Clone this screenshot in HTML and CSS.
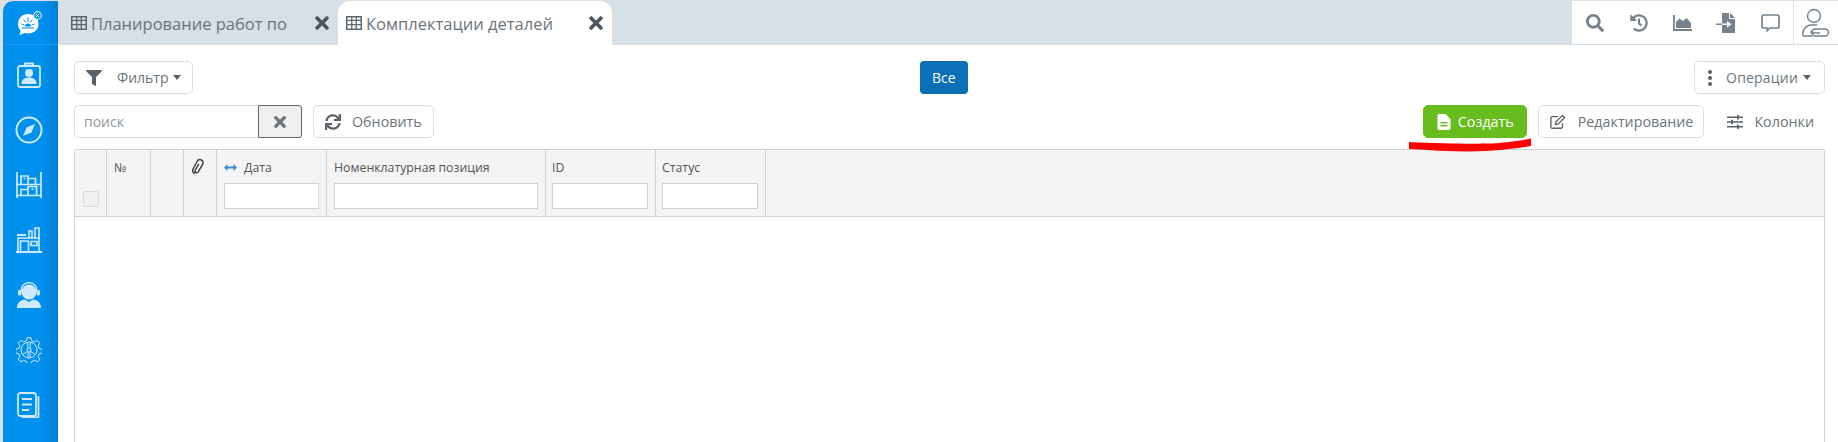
FILE: index.html
```html
<!DOCTYPE html>
<html lang="ru">
<head>
    <meta charset="UTF-8">
    <title>Комплектации деталей</title>
    <link rel="stylesheet" href="styles.css">
</head>
<body>
    <svg class="defs" width="0" height="0">
        <symbol id="i-grid" viewBox="0 0 16 14"><path d="M0 0h16v14H0zM1.500 1.500v2.300h3.600V1.500zm4.900 0v2.300h3.200V1.500zm4.500 0v2.300h3.600V1.500zM1.500 5.100v2.900h3.600V5.100zm4.900 0v2.900h3.200V5.100zm4.500 0v2.900h3.600V5.100zM1.500 9.300v3.200h3.600V9.300zm4.900 0v3.200h3.200V9.300zm4.500 0v3.200h3.600V9.300z" fill-rule="evenodd"/></symbol>
        <symbol id="i-x" viewBox="0 0 352 512"><path d="M242.720 256l100.070-100.070c12.280-12.280 12.280-32.190 0-44.480l-22.240-22.240c-12.280-12.280-32.190-12.280-44.480 0L176 189.280 75.930 89.210c-12.280-12.280-32.190-12.280-44.480 0L9.210 111.450c-12.280 12.280-12.280 32.190 0 44.480L109.280 256 9.210 356.070c-12.280 12.280-12.280 32.190 0 44.480l22.240 22.240c12.280 12.280 32.200 12.280 44.480 0L176 322.720l100.070 100.070c12.280 12.280 32.200 12.280 44.480 0l22.240-22.240c12.280-12.280 12.280-32.190 0-44.480L242.720 256z"/></symbol>
        <symbol id="i-filter" viewBox="0 0 512 512"><path d="M487.976 0H24.028C2.710 0-8.047 25.866 7.058 40.971L192 225.941V432c0 7.831 3.821 15.170 10.237 19.662l80 55.980C298.020 518.690 320 507.493 320 487.980V225.941l184.947-184.970C520.021 25.896 509.338 0 487.976 0z"/></symbol>
    </svg>

    <div class="app">
        <aside class="sidebar">
            <div class="side-logo">
                <svg width="28" height="28" viewBox="0 0 28 28"><path d="M13 4C7 4 3 8.500 3 14c0 2.800 1 5 2.700 6.800L4.500 25l5.200-2c1 .3 2.200.5 3.300.5 6 0 10.500-4 10.500-9.500S19 4 13 4z" fill="#fff"/><path d="M10 16.500a3 3 0 0 1 6 0zM7 17.500h12v1.100H7z" fill="#0090ee"/><path d="M13 7.500v4.500M8.500 9.500l2.500 3M17.500 9.500l-2.500 3M6.500 14l3 1M19.500 14l-3 1" stroke="#0090ee" stroke-width="1" fill="none"/><circle cx="22.500" cy="5.500" r="3.800" fill="#0090ee" stroke="#cfe9ff" stroke-width="1.200"/><path d="M20.800 3.800l3.400 3.400M24.200 3.800l-3.400 3.400" stroke="#fff" stroke-width="1"/></svg>
            </div>
            <nav class="side-nav">
                <a class="side-item"><svg width="26" height="26" viewBox="0 0 26 26" fill="none" stroke="currentColor" stroke-width="1.800"><rect x="2" y="4" width="22" height="21" rx="2"/><path d="M9 4V1.500h8V4"/><circle cx="13" cy="11" r="4" fill="currentColor" stroke="none"/><path d="M5.500 22c0-4.500 3-6.500 7.500-6.500s7.500 2 7.500 6.500z" fill="currentColor" stroke="none"/></svg></a>
                <a class="side-item"><svg width="28" height="28" viewBox="0 0 28 28" fill="none" stroke="currentColor" stroke-width="2"><circle cx="14" cy="14" r="12.500"/><path d="M20 8l-3.500 8.500L8 20l3.500-8.500z" fill="currentColor" stroke="none"/></svg></a>
                <a class="side-item"><svg width="26" height="26" viewBox="0 0 26 26" fill="none" stroke="currentColor" stroke-width="1.700"><path d="M1 0v26M25 0v26M1 12.500h24M1 23.500h24"/><path d="M5 12V4h7v8M12 6.500h7.500V12M5 23v-5.500h7V23M12 23v-8.500h8.500V23"/><path d="M7.500 6.500h2M15.500 17h2"/></svg></a>
                <a class="side-item"><svg width="26" height="26" viewBox="0 0 26 26" fill="none" stroke="currentColor" stroke-width="1.600"><path d="M0 25h26" stroke-width="2"/><path d="M2 25V11h21v14M4.500 25V14h8v11M15 14.500h6v4h-6z"/><path d="M1 8h9" stroke-width="2"/><path d="M13 11V4h3v7M19 11V1h4v10"/></svg></a>
                <a class="side-item"><svg width="24" height="26" viewBox="0 0 24 26" fill="currentColor"><circle cx="12" cy="10" r="7.500"/><path d="M12 0C6.500 0 3.500 4 3.500 9h1.300c0-4.500 3-7.800 7.200-7.800s7.200 3.300 7.200 7.800h1.300C20.500 4 17.500 0 12 0z"/><rect x="1" y="8" width="3.500" height="5.500" rx="1.500"/><rect x="19.500" y="8" width="3.500" height="5.500" rx="1.500"/><path d="M0 26c0-5.500 3.500-8 8-8.500l4 2.500 4-2.500c4.500.5 8 3 8 8.500z"/></svg></a>
                <a class="side-item"><svg width="26" height="26" viewBox="0 0 26 26" fill="none" stroke="currentColor" stroke-width="1"><path d="M11 .7h4l.7 3 2.800 1.200 2.600-1.600 2.600 2.800-1.500 2.500 1.100 2.900 3 .7v3.800l-3 .7-1.100 2.900 1.500 2.500-2.600 2.800-2.600-1.600-2.800 1.200-.7 3h-4l-.7-3-2.800-1.200-2.600 1.600-2.600-2.800 1.500-2.500-1.100-2.900-3-.7v-3.800l3-.7 1.100-2.900-1.500-2.500 2.600-2.800 2.600 1.600 2.800-1.200z"/><circle cx="13" cy="13" r="8"/><circle cx="13" cy="13" r="2"/><path d="M11.500 5.200l.5 6M14.500 5.200l-.5 6M6.500 17.500l5-3M19.500 17.500l-5-3M12 15v5.800M14 15v5.800"/></svg></a>
                <a class="side-item"><svg width="24" height="26" viewBox="0 0 24 26" fill="none" stroke="currentColor" stroke-width="1.800"><rect x="1" y="1" width="18" height="23" rx="2.500"/><path d="M21.500 4v20a1.500 1.500 0 0 1-1.500 1.500H5"/><path d="M5 7h10M5 12.500h10M5 18h7"/></svg></a>
            </nav>
        </aside>

        <main class="main">
            <header class="topbar">
                <div class="tabs">
                    <div class="tab">
                        <svg class="tab-grid"><use href="#i-grid"/></svg>
                        <span class="tab-title">Планирование работ по</span>
                        <svg class="tab-close"><use href="#i-x"/></svg>
                    </div>
                    <div class="tab tab-active">
                        <svg class="tab-grid"><use href="#i-grid"/></svg>
                        <span class="tab-title">Комплектации деталей</span>
                        <svg class="tab-close"><use href="#i-x"/></svg>
                    </div>
                </div>
                <div class="top-tools">
                    <a class="tool"><svg width="18" height="18" viewBox="0 0 512 512"><path d="M505 442.700L405.300 343c-4.500-4.500-10.600-7-17-7H372c27.600-35.300 44-79.700 44-128C416 93.100 322.900 0 208 0S0 93.100 0 208s93.100 208 208 208c48.300 0 92.700-16.400 128-44v16.300c0 6.400 2.500 12.500 7 17l99.700 99.700c9.400 9.400 24.600 9.400 33.900 0l28.300-28.300c9.400-9.400 9.400-24.600.1-34zM208 336c-70.700 0-128-57.200-128-128 0-70.700 57.200-128 128-128 70.700 0 128 57.200 128 128 0 70.700-57.200 128-128 128z"/></svg></a>
                    <a class="tool"><svg width="18" height="18" viewBox="0 0 512 512"><path d="M504 255.531c.253 136.640-111.180 248.372-247.820 248.468-59.015.042-113.223-20.530-155.822-54.911-11.077-8.940-11.905-25.541-1.839-35.607l11.267-11.267c8.609-8.609 22.353-9.551 31.891-1.984C173.062 425.135 212.781 440 256 440c101.705 0 184-82.311 184-184 0-101.705-82.311-184-184-184-48.814 0-93.149 18.969-126.068 49.932l50.754 50.754c10.080 10.080 2.941 27.314-11.313 27.314H24c-8.837 0-16-7.163-16-16V38.627c0-14.254 17.234-21.393 27.314-11.314l49.372 49.372C129.209 34.136 189.552 8 256 8c136.810 0 247.747 110.780 248 247.531zm-180.912 78.784l9.823-12.630c8.138-10.463 6.253-25.542-4.210-33.679L288 256.349V152c0-13.255-10.745-24-24-24h-16c-13.255 0-24 10.745-24 24v135.651l65.409 50.874c10.463 8.137 25.541 6.253 33.679-4.210z"/></svg></a>
                    <a class="tool"><svg width="19" height="16" viewBox="0 0 19 16"><path d="M0 0h1.800v14H19v2H0z"/><path d="M3 13V7l3.500-3.500L10 6l3.500-3L18 8v5z"/></svg></a>
                    <a class="tool"><svg width="20" height="20" viewBox="0 0 20 20"><path d="M6 0h8l5 5v15H6z"/><path d="M0 10.500h6V12H0z"/><path d="M6 10.500h5V8l4.500 3.250L11 14.500V12H6z" fill="#fff"/><path d="M13.500 0v5.500H19" fill="none" stroke="#fff"/></svg></a>
                    <a class="tool"><svg width="19" height="18" viewBox="0 0 19 18" fill="none" stroke="currentColor" stroke-width="1.700"><path d="M2.500 1h14A1.500 1.500 0 0 1 18 2.500v10a1.500 1.500 0 0 1-1.500 1.500H9l-2.800 2.700V14H2.500A1.500 1.500 0 0 1 1 12.500v-10A1.500 1.500 0 0 1 2.500 1z"/></svg></a>
                    <a class="tool tool-user"><svg width="28" height="30" viewBox="0 0 28 30" fill="none" stroke="currentColor" stroke-width="1.400"><circle cx="12" cy="8" r="6.500"/><path d="M1 28c-1-6 3-11 8-11h6M1 28h9M8 24h2a3 3 0 0 1 3-3h10a3.500 3.500 0 0 1 0 7H13a3 3 0 0 1-3-3h8"/></svg></a>
                </div>
            </header>

            <section class="content">
                <div class="row">
                    <button class="btn"><svg class="btn-icon"><use href="#i-filter"/></svg>Фильтр<span class="caret"></span></button>
                    <button class="btn-all">Все</button>
                    <button class="btn btn-ops"><svg class="btn-icon btn-dots" viewBox="0 0 4 16"><circle cx="2" cy="2" r="2"/><circle cx="2" cy="8" r="2"/><circle cx="2" cy="14" r="2"/></svg>Операции<span class="caret"></span></button>
                </div>

                <div class="row row-actions">
                    <div class="row-group">
                        <div class="search">
                            <input class="search-input" type="text" placeholder="поиск">
                            <button class="search-clear"><svg><use href="#i-x"/></svg></button>
                        </div>
                        <button class="btn btn-refresh"><svg class="btn-icon" viewBox="0 0 512 512"><path d="M440.650 12.570l4 82.770A247.160 247.160 0 0 0 255.830 8C134.730 8 33.910 94.920 12.290 209.820A12 12 0 0 0 24.090 224h49.050a12 12 0 0 0 11.670-9.260 175.910 175.910 0 0 1 317-56.940l-101.460-4.860a12 12 0 0 0-12.570 12v47.410a12 12 0 0 0 12 12H500a12 12 0 0 0 12-12V12a12 12 0 0 0-12-12h-47.370a12 12 0 0 0-11.980 12.570zM255.830 432a175.610 175.610 0 0 1-146-77.800l101.800 4.870a12 12 0 0 0 12.570-12v-47.400a12 12 0 0 0-12-12H12a12 12 0 0 0-12 12V500a12 12 0 0 0 12 12h47.350a12 12 0 0 0 12-12.600l-4.150-82.570A247.170 247.170 0 0 0 255.830 504c121.110 0 221.930-86.920 243.550-201.820a12 12 0 0 0-11.800-14.180h-49.050a12 12 0 0 0-11.670 9.260A175.860 175.860 0 0 1 255.830 432z"/></svg>Обновить</button>
                    </div>
                    <div class="row-group">
                        <button class="btn btn-green"><svg class="btn-icon" viewBox="0 0 13 16"><path d="M1.500 0H8l5 5v9.500a1.500 1.500 0 0 1-1.500 1.500h-10A1.500 1.500 0 0 1 0 14.500v-13A1.500 1.500 0 0 1 1.500 0zM3 8v1.500h7V8zm0 3v1.500h7V11z" fill-rule="evenodd"/></svg>Создать</button>
                        <button class="btn btn-edit"><svg class="btn-icon icon-line" viewBox="0 0 18 16"><path d="M14 9.500v4A1.500 1.500 0 0 1 12.500 15h-10A1.500 1.500 0 0 1 1 13.500v-10A1.500 1.500 0 0 1 2.500 2H9"/><path d="M6.500 8l-.5 3 3-.5 7.500-7.500L14 .5z"/></svg>Редактирование</button>
                        <button class="btn btn-plain"><svg class="btn-icon" viewBox="0 0 16 14"><path d="M0 1.500h16v1.400H0zM0 6.300h16v1.400H0zM0 11.100h16v1.400H0z"/><path d="M10 0h1.800v4.400H10zM4 4.800h1.800v4.400H4zM10 9.600h1.800V14H10z"/></svg>Колонки</button>
                    </div>
                </div>

                <div class="grid">
                    <div class="grid-head">
                        <div class="col col-check"><span class="checkbox"></span></div>
                        <div class="col col-num"><span class="col-label">№</span></div>
                        <div class="col col-empty"></div>
                        <div class="col col-clip">
                            <svg class="clip" viewBox="0 0 14 16" fill="none" stroke="#444" stroke-width="1.500"><path d="M4 14.500c-2 -.5-3-2.500-2-4.500l4-7.500c1-1.800 3-2.300 4.500-1.500s2 2.800 1 4.500l-4 7c-.6 1-1.800 1.400-2.700.9s-1.100-1.600-.5-2.600l3.500-6"/></svg>
                        </div>
                        <div class="col col-date">
                            <span class="col-label"><svg class="arrows" viewBox="0 0 13 7"><path d="M0 3.500L3.500 0v2.500h6V0L13 3.500 9.500 7V4.500h-6V7z"/></svg>Дата</span>
                            <input class="col-input" type="text">
                        </div>
                        <div class="col col-name">
                            <span class="col-label">Номенклатурная позиция</span>
                            <input class="col-input" type="text">
                        </div>
                        <div class="col col-id">
                            <span class="col-label">ID</span>
                            <input class="col-input" type="text">
                        </div>
                        <div class="col col-status">
                            <span class="col-label">Статус</span>
                            <input class="col-input" type="text">
                        </div>
                    </div>
                </div>
            </section>
        </main>
    </div>

    <!-- red marker stroke drawn over the page -->
    <svg class="marker" width="123" height="15" viewBox="0 0 123 15"><path d="M0 4C40 6 80 6 90 5c15-1.500 25-3 32-4.500V8c-17 3-37 5.500-62 5.500-20 0-40-1.500-60-2.500z" fill="#f00"/></svg>
</body>
</html>
```
FILE: styles.css
```css
* {
    box-sizing: border-box;
}
html, body {
    margin: 0;
    height: 100%;
    overflow: hidden;
}
body {
    font-family: "Open Sans", "Noto Sans", sans-serif;
    font-size: 14px;
    color: #6b747b;
    background: #e0e0e0;
    position: relative;
}
.defs {
    position: absolute;
}
.app {
    display: flex;
    height: 100%;
    padding: 1px 0 0 3px;
}

/* sidebar */
.sidebar {
    width: 55px;
    flex-shrink: 0;
    background: linear-gradient(90deg, #0090ee 0%, #0090ee 70%, #0080d6 100%);
    border-top-left-radius: 10px;
    color: #cfe9ff;
}
.side-logo {
    height: 44px;
    display: flex;
    align-items: center;
    justify-content: center;
    padding: 2px 3px 0 0;
    border-bottom: 1px solid #1a9bf0;
}
.side-nav {
    display: flex;
    flex-direction: column;
}
.side-item {
    height: 55px;
    display: flex;
    align-items: center;
    justify-content: center;
    padding-right: 3px;
    padding-top: 4px;
}

/* top bar */
.main {
    flex: 1;
    min-width: 0;
    display: flex;
    flex-direction: column;
    background: #fff;
}
.topbar {
    height: 44px;
    flex-shrink: 0;
    display: flex;
    justify-content: space-between;
    background: #d6e0e7;
}
.tabs {
    display: flex;
}
.tab {
    width: 280px;
    display: flex;
    align-items: center;
    padding-left: 13px;
    font-size: 16.5px;
    color: #6b747b;
    border-radius: 12px 12px 0 0;
}
.tab-active {
    width: 274px;
    padding-left: 8px;
    background: #fff;
}
.tab-grid {
    width: 16px;
    height: 14px;
    fill: #5d666d;
    flex-shrink: 0;
    margin-right: 4px;
}
.tab-title {
    flex: 1;
    white-space: nowrap;
}
.tab-close {
    width: 14px;
    height: 20px;
    fill: #4b5660;
    margin-right: 9px;
}
.top-tools {
    width: 266px;
    display: flex;
    align-items: center;
    background: #fff;
    border-bottom: 1px solid #d6e0e7;
    color: #76828b;
    padding-left: 1px;
}
.tool {
    width: 44px;
    height: 100%;
    display: flex;
    align-items: center;
    justify-content: center;
}
.tool svg {
    fill: currentColor;
}
.tool svg[fill="none"] {
    fill: none;
}
.tool-user {
    width: 45px;
    border-left: 1px solid #d6e0e7;
    margin-left: 1px;
}

/* toolbar rows */
.content {
    flex: 1;
    min-height: 0;
    display: flex;
    flex-direction: column;
    padding: 16px 13px 0 16px;
}
.row {
    display: flex;
    justify-content: space-between;
    align-items: center;
    margin-bottom: 11px;
}
.row-actions {
    font-size: 14.3px;
}
.row-group {
    display: flex;
    align-items: center;
    gap: 11px;
}
.btn {
    height: 33px;
    display: inline-flex;
    align-items: center;
    padding: 0 11px;
    font: inherit;
    color: #6b747b;
    background: #fff;
    border: 1px solid #d6e0e7;
    border-radius: 5px;
}
.btn-icon {
    width: 16px;
    height: 16px;
    margin-right: 15px;
    fill: #5a6168;
    flex-shrink: 0;
}
.icon-line {
    fill: none;
    stroke: #5a6168;
    stroke-width: 1.500;
}
.btn-dots {
    width: 6px;
    margin: 0 13px 0 1px;
}
.btn-ops {
    padding-right: 13px;
    letter-spacing: .2px;
}
.btn-refresh .btn-icon {
    margin-right: 11px;
}
.btn-edit {
    padding-right: 10px;
}
.btn-edit .btn-icon {
    margin-right: 12px;
}
.btn-plain {
    border-color: transparent;
    background: none;
    padding-right: 10px;
}
.btn-plain .btn-icon {
    margin-right: 11px;
}
.btn-green {
    background: #67bd1e;
    border-color: #67bd1e;
    color: #fff;
    padding: 0 12px;
}
.btn-green .btn-icon {
    fill: #fff;
    margin-right: 6px;
}
.caret {
    width: 0;
    height: 0;
    margin-left: 5px;
    border-left: 4px solid transparent;
    border-right: 4px solid transparent;
    border-top: 5px solid #5a6168;
}
.btn-all {
    width: 48px;
    height: 33px;
    font: inherit;
    color: #fff;
    background: #0b6fb8;
    border: none;
    border-radius: 4px;
}
.search {
    display: flex;
}
.search-input {
    width: 184px;
    height: 33px;
    padding: 0 9px;
    font-family: inherit;
    font-size: 14px;
    border: 1px solid #d6e0e7;
    border-right: none;
    border-radius: 5px 0 0 5px;
}
.search-input::placeholder {
    color: #90979d;
}
.search-clear {
    width: 44px;
    height: 33px;
    display: flex;
    align-items: center;
    justify-content: center;
    background: #efefef;
    border: 1px solid #666;
    border-radius: 0 3px 3px 0;
}
.search-clear svg {
    width: 12px;
    height: 18px;
    fill: #6b747b;
}

/* grid */
.grid {
    flex: 1;
    border: 1px solid #d2d2d2;
    border-bottom: none;
    border-radius: 3px 3px 0 0;
}
.grid-head {
    height: 67px;
    display: flex;
    background: #f4f4f4;
    border-bottom: 1px solid #d2d2d2;
    font-size: 12.3px;
    color: #555;
}
.col {
    display: flex;
    flex-direction: column;
    justify-content: space-between;
    padding: 9px 7px 7px;
    border-right: 1px solid #d2d2d2;
}
.col-check {
    width: 32px;
    justify-content: flex-end;
    padding: 0 0 9px 8px;
}
.col-num {
    width: 44px;
}
.col-empty, .col-clip {
    width: 33px;
}
.col-date, .col-id, .col-status {
    width: 110px;
}
.col-id, .col-status {
    padding-left: 6px;
}
.col-name {
    width: 219px;
}
.checkbox {
    width: 16px;
    height: 16px;
    background: #f0f0f0;
    border: 1px solid #d6dbdf;
    border-radius: 2px;
}
.col-label {
    display: flex;
    align-items: center;
    height: 16px;
    white-space: nowrap;
}
.col-input {
    width: 100%;
    height: 26px;
    background: #fff;
    border: 1px solid #cfd3d6;
}
.clip {
    width: 14px;
    height: 16px;
}
.arrows {
    width: 13px;
    height: 7px;
    fill: #3a8fd6;
    margin-right: 7px;
}

/* red marker */
.marker {
    position: absolute;
    left: 1409px;
    top: 138px;
}
```
